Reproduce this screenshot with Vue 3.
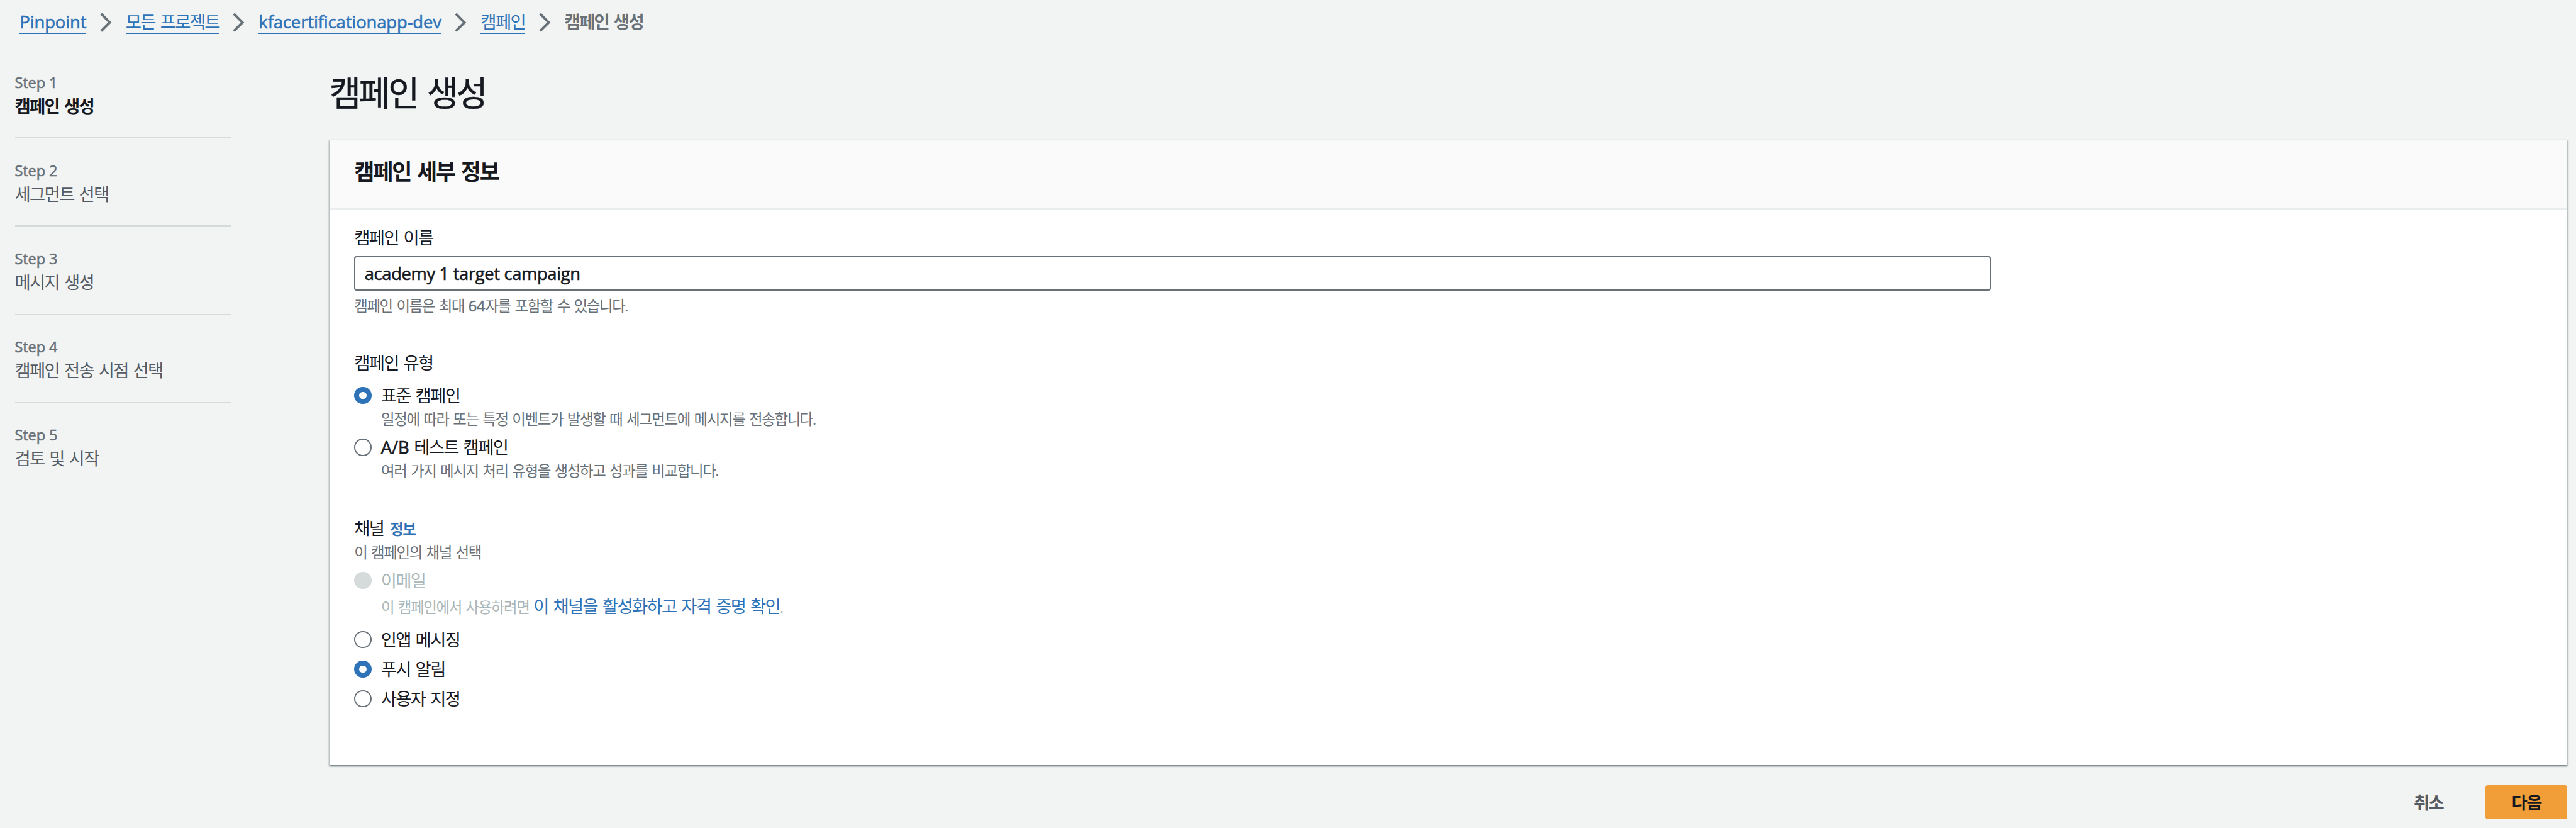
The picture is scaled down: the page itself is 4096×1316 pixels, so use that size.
<template>
  <div class="page">
    <nav class="breadcrumbs">
      <template v-for="crumb in crumbs" :key="crumb.text">
        <a href="#" class="crumb-link" :class="{ latin: crumb.latin }" @click.prevent>{{ crumb.text }}</a>
        <svg class="crumb-arrow" viewBox="0 0 16 16" fill="none">
          <path d="M4 1l7 7-7 7" stroke="currentColor" stroke-width="2" />
        </svg>
      </template>
      <span class="crumb-current">캠페인 생성</span>
    </nav>

    <div class="layout">
      <ol class="steps">
        <li
          v-for="(step, index) in steps"
          :key="step"
          class="step"
          :class="{ active: index === currentStep }"
        >
          <div class="step-number latin">Step {{ index + 1 }}</div>
          <div class="step-title">{{ step }}</div>
        </li>
      </ol>

      <main class="content">
        <h1 class="title">캠페인 생성</h1>

        <section class="panel">
          <header class="panel-header">
            <h2>캠페인 세부 정보</h2>
          </header>

          <div class="panel-body">
            <div class="field">
              <label class="label" for="campaign-name">캠페인 이름</label>
              <input id="campaign-name" v-model="name" class="text-input latin" type="text" maxlength="64" />
              <div class="hint">캠페인 이름은 최대 <span class="latin">64</span>자를 포함할 수 있습니다.</div>
            </div>

            <div class="field">
              <div class="label">캠페인 유형</div>
              <div class="type-list">
                <div v-for="type in types" :key="type.value">
                  <label class="option">
                    <input v-model="selectedType" class="radio" type="radio" name="type" :value="type.value" />
                    <span><span v-if="type.prefix" class="latin">{{ type.prefix }}</span> {{ type.label }}</span>
                  </label>
                  <div class="description">{{ type.description }}</div>
                </div>
              </div>
            </div>

            <div class="field">
              <div class="label">채널 <a href="#" class="info" @click.prevent>정보</a></div>
              <div class="sub-label">이 캠페인의 채널 선택</div>
              <div class="channel-list">
                <div v-for="channel in channels" :key="channel.value">
                  <label class="option" :class="{ disabled: channel.disabled }">
                    <input
                      v-model="selectedChannel"
                      class="radio"
                      type="radio"
                      name="channel"
                      :value="channel.value"
                      :disabled="channel.disabled"
                    />
                    <span>{{ channel.label }}</span>
                  </label>
                  <div v-if="channel.disabled" class="enable-note">
                    이 캠페인에서 사용하려면 <a href="#" @click.prevent>이 채널을 활성화하고 자격 증명 확인</a>.
                  </div>
                </div>
              </div>
            </div>
          </div>
        </section>

        <div class="actions">
          <button class="btn btn-link" type="button">취소</button>
          <button class="btn btn-primary" type="button">다음</button>
        </div>
      </main>
    </div>
  </div>
</template>

<script setup>
import { ref } from 'vue';

const crumbs = [
  { text: 'Pinpoint', latin: true },
  { text: '모든 프로젝트' },
  { text: 'kfacertificationapp-dev', latin: true },
  { text: '캠페인' },
];

const steps = ['캠페인 생성', '세그먼트 선택', '메시지 생성', '캠페인 전송 시점 선택', '검토 및 시작'];
const currentStep = ref(0);

const name = ref('academy 1 target campaign');

const types = [
  {
    value: 'standard',
    label: '표준 캠페인',
    description: '일정에 따라 또는 특정 이벤트가 발생할 때 세그먼트에 메시지를 전송합니다.',
  },
  {
    value: 'ab',
    prefix: 'A/B',
    label: '테스트 캠페인',
    description: '여러 가지 메시지 처리 유형을 생성하고 성과를 비교합니다.',
  },
];
const selectedType = ref('standard');

const channels = [
  { value: 'email', label: '이메일', disabled: true },
  { value: 'in-app', label: '인앱 메시징' },
  { value: 'push', label: '푸시 알림' },
  { value: 'custom', label: '사용자 지정' },
];
const selectedChannel = ref('push');
</script>

<style>
body {
  margin: 0;
  background: #f2f4f3;
}
</style>

<style scoped>
.page {
  min-height: 1316px;
  background: #f2f4f3;
  color: #16191f;
  font-family: "Open Sans", "Noto Sans CJK KR", sans-serif;
  font-size: 27.4px;
}

.page * {
  box-sizing: border-box;
  letter-spacing: -0.06em;
  word-spacing: 0.082em;
}

.page .latin {
  letter-spacing: -0.004em;
  word-spacing: 0;
  -webkit-text-stroke: 0.6px currentColor;
}

a {
  color: #2e73b8;
  text-decoration: none;
}

.breadcrumbs {
  display: flex;
  align-items: flex-start;
  gap: 15.6px;
  height: 80.3px;
  padding: 17px 0 0 31.3px;
  line-height: 35px;
}

.crumb-link {
  border-bottom: 2px solid #2e73b8;
}

.crumb-arrow {
  width: 31.3px;
  height: 31.3px;
  margin-top: 2.7px;
  color: #687078;
}

.crumb-current {
  color: #687078;
  font-weight: 700;
}

.layout {
  display: flex;
}

.steps {
  width: 343.8px;
  margin: 0 156.7px 0 23.5px;
  padding: 0;
  list-style: none;
}

.step {
  padding: 33.7px 0 29.4px;
  border-bottom: 2px solid #d5dbdb;
  color: #545b64;
}

.step:last-child {
  border-bottom: none;
}

.step-number {
  font-size: 23.5px;
  line-height: 35px;
  color: #687078;
}

.step-title {
  line-height: 40px;
}

.step.active .step-title {
  color: #16191f;
  font-weight: 700;
}

.content {
  flex: 1;
  padding-right: 13.7px;
}

.title {
  margin: 32.2px 0 38.9px;
  font-size: 54.2px;
  font-weight: 400;
  line-height: 70px;
  -webkit-text-stroke: 0.6px currentColor;
}

.panel {
  background: #fff;
  border-top: 2px solid #eaeded;
  box-shadow:
    0 2px 2px 0 rgba(0, 28, 36, 0.3),
    2px 2px 2px 0 rgba(0, 28, 36, 0.15),
    -2px 2px 2px 0 rgba(0, 28, 36, 0.15);
}

.panel-header {
  height: 109.6px;
  padding: 27.2px 39.2px 0;
  background: #fafafa;
  border-bottom: 2px solid #eaeded;
}

.panel-header h2 {
  margin: 0;
  font-size: 34.9px;
  font-weight: 700;
  line-height: 44px;
}

.panel-body {
  display: flex;
  flex-direction: column;
  gap: 63.6px;
  padding: 29.8px 39.2px 92.1px;
}

.label {
  display: block;
  line-height: 30px;
}

.text-input {
  display: block;
  width: 2602.4px;
  height: 54.9px;
  margin-top: 14.6px;
  padding: 0 14.6px;
  border: 2px solid #687078;
  border-radius: 4px;
  background: #fff;
  color: #16191f;
  font-family: inherit;
  font-size: 27.3px;
  outline: none;
}

.page .text-input {
  letter-spacing: -0.012em;
}

.hint {
  margin-top: 10.5px;
  font-size: 23.5px;
  line-height: 26px;
  color: #687078;
}

.type-list {
  display: flex;
  flex-direction: column;
  gap: 18.4px;
  margin-top: 22.7px;
}

.option {
  display: flex;
  align-items: center;
  gap: 15.2px;
  line-height: 27.4px;
}

.option.disabled {
  color: #aab7b8;
}

.radio {
  flex: none;
  width: 27.4px;
  height: 27.4px;
  margin: 0;
  appearance: none;
  background: #fff;
  border: 2px solid #687078;
  border-radius: 50%;
}

.radio:checked {
  border: 8px solid #2e73b8;
}

.radio:disabled {
  background: #d5dbdb;
  border-color: #d5dbdb;
}

.description {
  margin-top: 10.5px;
  padding-left: 42.8px;
  font-size: 23.5px;
  line-height: 26px;
  color: #687078;
}

.info {
  margin-left: 2px;
  font-size: 23.5px;
  font-weight: 700;
  line-height: 1;
}

.sub-label {
  margin-top: 9.7px;
  font-size: 23.5px;
  line-height: 26px;
  color: #687078;
}

.channel-list {
  display: flex;
  flex-direction: column;
  gap: 19.6px;
  margin-top: 18.3px;
}

.enable-note {
  height: 33.1px;
  margin-top: 13.9px;
  padding-left: 42.8px;
  font-size: 23.5px;
  line-height: 30px;
  color: #aab7b8;
}

.enable-note a {
  font-size: 27.4px;
  line-height: 1;
}

.actions {
  display: flex;
  justify-content: flex-end;
  margin-top: 31.3px;
}

.btn {
  height: 54.9px;
  padding: 0 41px 2px;
  border: none;
  border-radius: 4px;
  font-family: inherit;
  font-size: 27.4px;
  font-weight: 700;
  cursor: pointer;
}

.btn-link {
  margin-right: 26px;
  background: transparent;
  color: #545b64;
}

.btn-primary {
  width: 130.3px;
  background: #f29e38;
  color: #16191f;
}
</style>
